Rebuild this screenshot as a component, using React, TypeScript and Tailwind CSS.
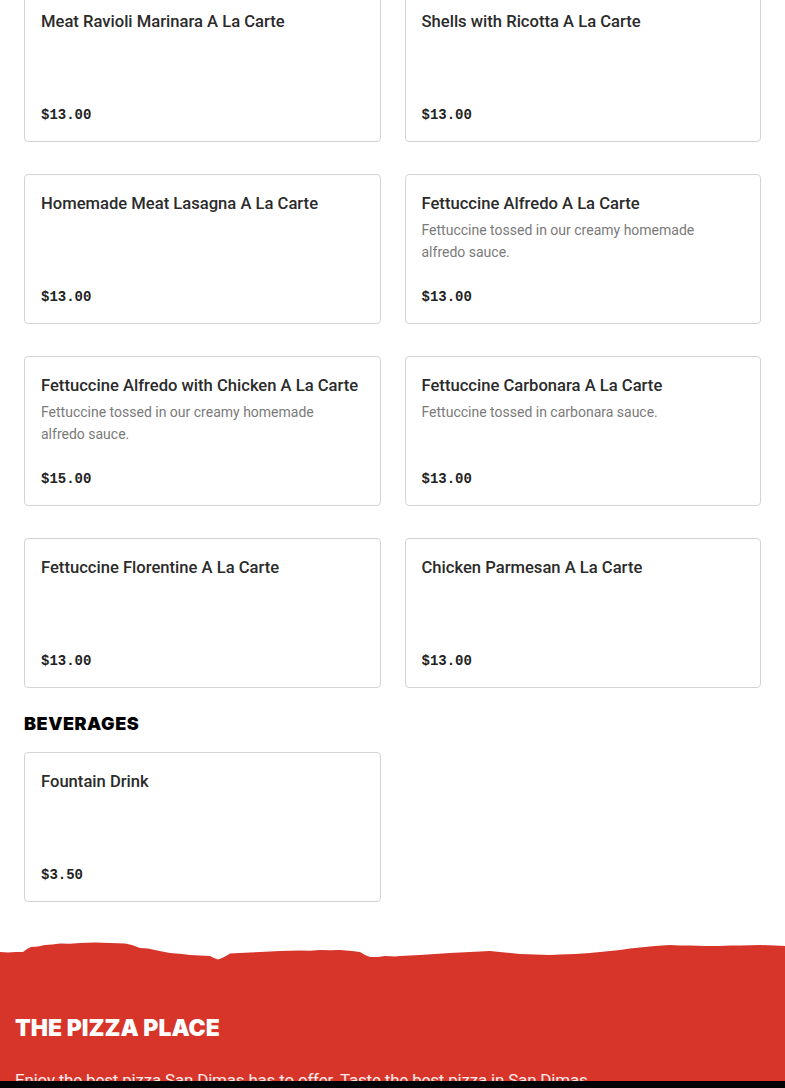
type Item = { name: string; desc?: string; price: string };

const pasta: Item[] = [
  { name: "Meat Ravioli Marinara A La Carte", price: "$13.00" },
  { name: "Shells with Ricotta A La Carte", price: "$13.00" },
  { name: "Homemade Meat Lasagna A La Carte", price: "$13.00" },
  {
    name: "Fettuccine Alfredo A La Carte",
    desc: "Fettuccine tossed in our creamy homemade alfredo sauce.",
    price: "$13.00",
  },
  {
    name: "Fettuccine Alfredo with Chicken A La Carte",
    desc: "Fettuccine tossed in our creamy homemade alfredo sauce.",
    price: "$15.00",
  },
  {
    name: "Fettuccine Carbonara A La Carte",
    desc: "Fettuccine tossed in carbonara sauce.",
    price: "$13.00",
  },
  { name: "Fettuccine Florentine A La Carte", price: "$13.00" },
  { name: "Chicken Parmesan A La Carte", price: "$13.00" },
];

const beverages: Item[] = [{ name: "Fountain Drink", price: "$3.50" }];

function MenuCard({ item }: { item: Item }) {
  return (
    <div className="h-[150px] border border-[#d4d4d4] rounded-[4px] bg-white px-4 pt-4 pb-[15px] flex flex-col">
      <h3 className="text-[16.6px] leading-[26px] font-medium text-[#2b2b2b] font-['Roboto',sans-serif]">
        {item.name}
      </h3>
      {item.desc && (
        <p className="mt-[2px] text-[14px] leading-[22px] text-[#7a7a7a] font-['Roboto',sans-serif] pr-6">
          {item.desc}
        </p>
      )}
      <div className="mt-auto text-[14px] leading-[22px] font-bold text-[#222] font-['Liberation_Mono',monospace]">
        {item.price}
      </div>
    </div>
  );
}

export default function App() {
  return (
    <div className="bg-white min-h-screen overflow-hidden">
      <main className="px-6">
        {/* Pasta a la carte */}
        <div className="grid grid-cols-2 gap-x-6 gap-y-8 -mt-2">
          {pasta.map((item) => (
            <MenuCard key={item.name} item={item} />
          ))}
        </div>

        {/* Beverages */}
        <h2 className="mt-[22px] mb-[14px] text-[18px] leading-7 font-black uppercase tracking-[0.03em] text-black font-['Inter',sans-serif]">
          Beverages
        </h2>
        <div className="grid grid-cols-2 gap-x-6">
          {beverages.map((item) => (
            <MenuCard key={item.name} item={item} />
          ))}
        </div>
      </main>

      {/* Footer */}
      <footer className="mt-[38px]">
        <svg
          viewBox="0 0 785 30"
          preserveAspectRatio="none"
          className="block w-full h-[30px]"
        >
          <path
            fill="#d7352a"
            d="M0 12 L8 12.5 L16 12 L23 12 L27 9 L31 7 L38 6.5 L45 5 L52 4.5 L60 3.5 L70 3.8 L80 3 L95 2.5 L110 3 L118 3.2 L125 3.5 L132 5 L140 8 L148 8.5 L155 10 L162 11.5 L170 13 L182 14 L190 15 L200 15.5 L210 16 L214 18 L218 19.5 L222 18 L226 16 L230 13.5 L240 13 L250 12.6 L260 12 L270 11.6 L280 11 L300 10.5 L310 10.8 L320 10 L330 10.3 L340 10 L352 11 L360 12 L365 15 L370 17 L378 17 L385 16 L395 16.4 L400 16 L410 15.5 L420 15 L435 14 L450 13 L460 12.6 L470 12 L480 11.6 L490 11 L505 12.5 L520 14 L535 14.5 L550 15 L560 14.6 L575 14 L590 13 L600 12 L610 11 L620 10 L630 8.6 L640 7.5 L655 6 L670 5 L680 5.4 L690 5.5 L705 6 L720 6 L730 5.6 L740 5.5 L750 5.2 L760 5 L775 5.5 L785 6 L785 30 L0 30 Z"
          />
        </svg>
        <div className="bg-[#d7352a] px-[15px] pt-[44px] pb-10">
          <h2 className="text-[23px] leading-7 font-black uppercase text-white font-['Inter',sans-serif]">
            The Pizza Place
          </h2>
          <p className="mt-6 text-[17px] leading-7 tracking-[-0.2px] text-white/90 font-['Roboto',sans-serif]">
            Enjoy the best pizza San Dimas has to offer. Taste the best pizza in
            San Dimas.
          </p>
        </div>
      </footer>

      {/* bottom bar peeking in */}
      <div className="fixed bottom-0 left-0 right-0 h-[7px] bg-black" />
    </div>
  );
}
